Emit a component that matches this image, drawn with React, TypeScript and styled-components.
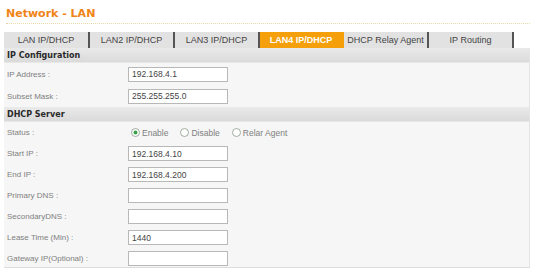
import React, { FC } from "react"
import styled, { createGlobalStyle } from "styled-components"

const GlobalStyle = createGlobalStyle`
  body {
    margin: 0;
    background: #ffffff;
    font-family: "Liberation Sans", Arial, sans-serif;
  }
`

interface Tab {
  label: string
  width: number
  active?: boolean
}

const tabs: Tab[] = [
  { label: "LAN IP/DHCP", width: 86 },
  { label: "LAN2 IP/DHCP", width: 85 },
  { label: "LAN3 IP/DHCP", width: 85 },
  { label: "LAN4 IP/DHCP", width: 84, active: true },
  { label: "DHCP Relay Agent", width: 85 },
  { label: "IP Routing", width: 85 },
]

interface Field {
  label: string
  value: string
}

const ipFields: Field[] = [
  { label: "IP Address :", value: "192.168.4.1" },
  { label: "Subset Mask :", value: "255.255.255.0" },
]

const dhcpFields: Field[] = [
  { label: "Start IP :", value: "192.168.4.10" },
  { label: "End IP :", value: "192.168.4.200" },
  { label: "Primary DNS :", value: "" },
  { label: "SecondaryDNS :", value: "" },
  { label: "Lease Time (Min) :", value: "1440" },
  { label: "Gateway IP(Optional) :", value: "" },
]

const Radio: FC<{ checked?: boolean; label: string }> = ({ checked, label }) => (
  <RadioItem>
    <svg width="9" height="9" viewBox="0 0 9 9">
      <circle cx="4.5" cy="4.5" r="4" fill="#fff" stroke="#8a9a8a" strokeWidth="0.8" />
      {checked && <circle cx="4.5" cy="4.5" r="2" fill="#3aa04a" />}
    </svg>
    {label}
  </RadioItem>
)

const App: FC = () => (
  <Page>
    <GlobalStyle />
    <Title>Network - LAN</Title>
    <TabBar>
      {tabs.map(t => (
        <TabItem key={t.label} $active={t.active} $width={t.width}>
          {t.label}
        </TabItem>
      ))}
    </TabBar>
    <Panel>
      <SectionHeader>IP Configuration</SectionHeader>
      {ipFields.map(f => (
        <Row key={f.label} $tall>
          <Label>{f.label}</Label>
          <Input defaultValue={f.value} />
        </Row>
      ))}
      <SectionHeader>DHCP Server</SectionHeader>
      <Row>
        <Label>Status :</Label>
        <RadioGroup>
          <Radio checked label="Enable" />
          <Radio label="Disable" />
          <Radio label="Relar Agent" />
        </RadioGroup>
      </Row>
      {dhcpFields.map(f => (
        <Row key={f.label}>
          <Label>{f.label}</Label>
          <Input defaultValue={f.value} />
        </Row>
      ))}
    </Panel>
  </Page>
)

const Page = styled.div`
  width: 536px;
  height: 273px;
  overflow: hidden;
`

const Title = styled.div`
  margin: 0 6px;
  padding-top: 7px;
  height: 16px;
  font-family: "DejaVu Sans", Verdana, sans-serif;
  font-weight: bold;
  font-size: 11px;
  color: #f08418;
  border-bottom: 1px dotted #ead9a8;
`

const TabBar = styled.div`
  display: flex;
  margin: 8px 0 0 4px;
  height: 16px;
`

const TabItem = styled.div<{ $active?: boolean; $width: number }>`
  width: ${p => p.$width}px;
  display: flex;
  align-items: center;
  justify-content: center;
  font-size: 9px;
  color: ${p => (p.$active ? "#ffffff" : "#444444")};
  font-weight: ${p => (p.$active ? "bold" : "normal")};
  background: ${p => (p.$active ? "#f5a00a" : "#e2e2e2")};
  border-right: 2px solid ${p => (p.$active ? "#f5a00a" : "#555555")};
  box-sizing: border-box;
  white-space: nowrap;
`

const Panel = styled.div`
  margin: 0 6px 0 4px;
  background: #f6f6f6;
  border-right: 1px solid #e4e4e4;
  border-bottom: 1px solid #dcdcdc;
  height: 219px;
`

const SectionHeader = styled.div`
  height: 14px;
  display: flex;
  align-items: center;
  padding-left: 3px;
  font-family: "DejaVu Sans", Verdana, sans-serif;
  font-weight: bold;
  font-size: 8px;
  color: #2a2a2a;
  background: linear-gradient(#eaeaea, #dadada);
  border-bottom: 1px dotted #e6e6e6;
`

const Row = styled.div<{ $tall?: boolean }>`
  display: flex;
  align-items: center;
  height: ${p => (p.$tall ? 22 : 21)}px;
  padding-left: 3px;
`

const Label = styled.div`
  width: 121px;
  font-size: 8px;
  color: #808080;
  white-space: nowrap;
`

const Input = styled.input`
  width: 100px;
  height: 15px;
  box-sizing: border-box;
  border: 1px solid #b8b8b8;
  background: #ffffff;
  padding: 0 3px;
  font-family: "Liberation Sans", Arial, sans-serif;
  font-size: 8.5px;
  color: #444444;
  outline: none;
`

const RadioGroup = styled.div`
  display: flex;
  gap: 12px;
  padding-left: 3px;
`

const RadioItem = styled.label`
  display: flex;
  align-items: center;
  gap: 2px;
  font-size: 8.5px;
  color: #808080;
`

export default App
